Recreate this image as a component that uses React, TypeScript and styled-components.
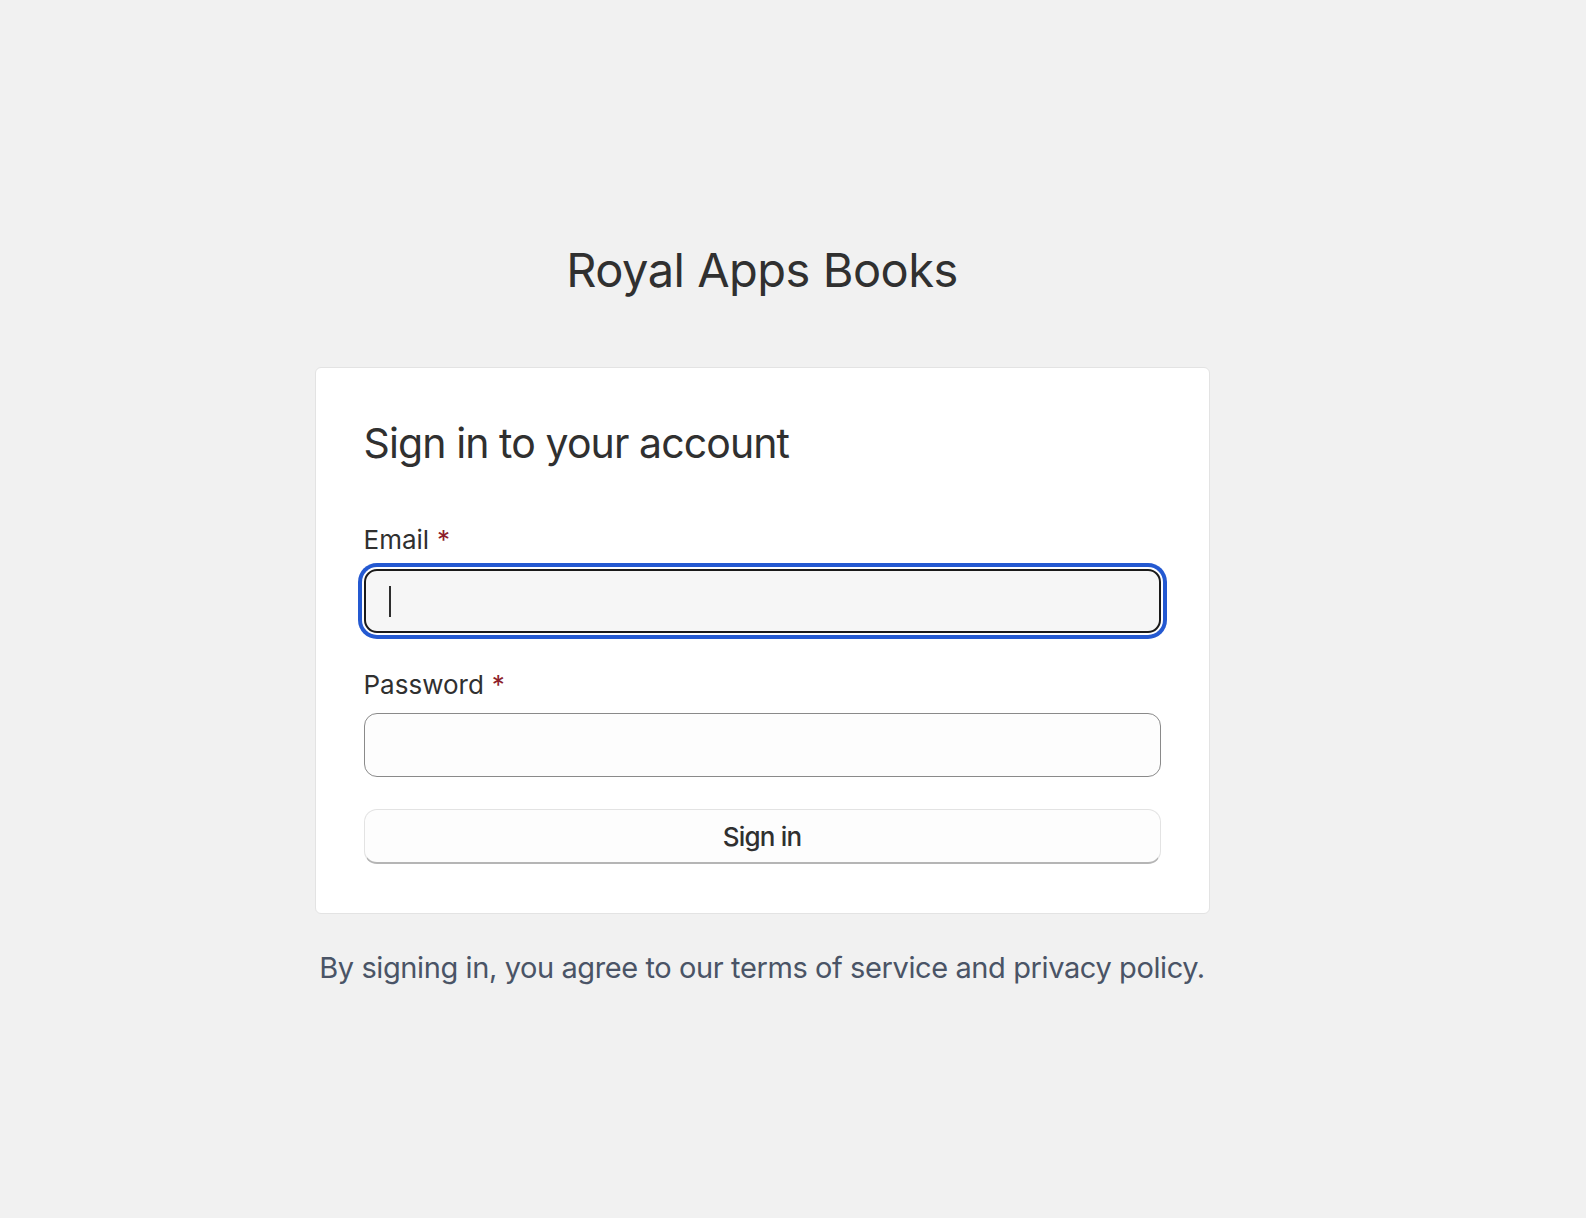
import React from "react";
import styled, { createGlobalStyle } from "styled-components";

const GlobalStyle = createGlobalStyle`
  html, body {
    margin: 0;
    padding: 0;
    background: #f1f1f1;
  }

  body {
    font-family: "Inter", "Noto Sans", sans-serif;
    color: #303030;
  }
`;

const Page = styled.main`
  min-height: 1218px;
  box-sizing: border-box;
  display: flex;
  flex-direction: column;
  align-items: center;
  padding: 242px 62px 0 0;
`;

const BrandTitle = styled.h1`
  margin: 0;
  font-size: 47px;
  font-weight: 400;
  line-height: 1.21;
  letter-spacing: -0.5px;
  color: #303030;
`;

const Card = styled.section`
  box-sizing: border-box;
  width: 895px;
  margin-top: 68px;
  padding: 50px 48px 49px;
  background: #ffffff;
  border: 1px solid #e3e3e3;
  border-radius: 6px;
  display: flex;
  flex-direction: column;
`;

const CardHeading = styled.h2`
  margin: 0 0 55px;
  font-size: 41px;
  font-weight: 400;
  line-height: 1.25;
  letter-spacing: -0.9px;
  color: #303030;
`;

const Field = styled.div<{ $gap?: number }>`
  display: flex;
  flex-direction: column;
  gap: 13px;
  margin-bottom: ${({ $gap }) => $gap ?? 36}px;
`;

const Label = styled.label`
  font-size: 26px;
  line-height: 1.21;
  color: #303030;
`;

const Required = styled.span`
  color: #8e1f2b;
  margin-left: 8px;
`;

const InputWrap = styled.div`
  position: relative;
`;

const TextInput = styled.input<{ $focused?: boolean }>`
  box-sizing: border-box;
  display: block;
  width: 100%;
  height: 64px;
  padding: 0 24px;
  font-family: "Inter", "Noto Sans", sans-serif;
  font-size: 26px;
  color: #303030;
  caret-color: ${({ $focused }) => ($focused ? "transparent" : "#303030")};
  border-radius: 13px;
  outline: none;
  background: ${({ $focused }) => ($focused ? "#f6f6f6" : "#fdfdfd")};
  border: ${({ $focused }) =>
    $focused ? "2px solid #1a1a1a" : "1px solid #8a8a8a"};
  box-shadow: ${({ $focused }) =>
    $focused ? "0 0 0 2px #ffffff, 0 0 0 6px #2459d1" : "none"};
`;

const Caret = styled.span`
  position: absolute;
  left: 25px;
  top: 17px;
  width: 2px;
  height: 31px;
  background: #2e2e2e;
  pointer-events: none;
`;

const SubmitButton = styled.button`
  box-sizing: border-box;
  width: 100%;
  height: 55px;
  font-family: "Inter", "Noto Sans", sans-serif;
  font-size: 26px;
  font-weight: 500;
  letter-spacing: -0.8px;
  color: #303030;
  background: #fdfdfd;
  border: 1px solid #e3e3e3;
  border-bottom: 2px solid #b5b5b5;
  border-radius: 13px;
  cursor: pointer;
`;

const Legal = styled.p`
  margin: 36px 0 0;
  font-size: 29px;
  line-height: 1.21;
  letter-spacing: -0.4px;
  color: #4a5466;
`;

const App: React.FC = () => {
  return (
    <>
      <GlobalStyle />
      <Page>
        <BrandTitle>Royal Apps Books</BrandTitle>
        <Card>
          <CardHeading>Sign in to your account</CardHeading>
          <Field>
            <Label htmlFor="email">
              Email<Required>*</Required>
            </Label>
            <InputWrap>
              <TextInput id="email" type="email" autoFocus $focused />
              <Caret />
            </InputWrap>
          </Field>
          <Field $gap={32}>
            <Label htmlFor="password">
              Password<Required>*</Required>
            </Label>
            <InputWrap>
              <TextInput id="password" type="password" />
            </InputWrap>
          </Field>
          <SubmitButton type="submit">Sign in</SubmitButton>
        </Card>
        <Legal>By signing in, you agree to our terms of service and privacy policy.</Legal>
      </Page>
    </>
  );
};

export default App;
